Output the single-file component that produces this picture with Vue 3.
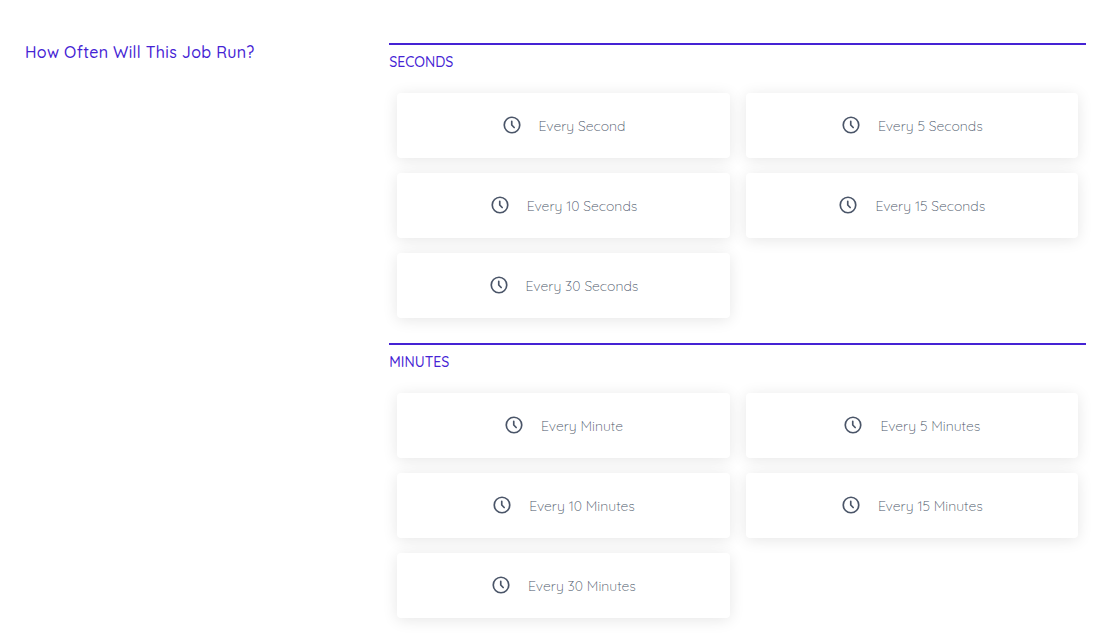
<script setup>
const groups = [
  { name: 'Seconds', options: ['Every Second', 'Every 5 Seconds', 'Every 10 Seconds', 'Every 15 Seconds', 'Every 30 Seconds'] },
  { name: 'Minutes', options: ['Every Minute', 'Every 5 Minutes', 'Every 10 Minutes', 'Every 15 Minutes', 'Every 30 Minutes'] },
]
</script>

<template>
  <main class="page">
    <h1 class="title">How Often Will This Job Run?</h1>
    <div class="groups">
      <section v-for="group in groups" :key="group.name" class="group">
        <h2 class="heading">{{ group.name }}</h2>
        <div class="options">
          <button v-for="option in group.options" :key="option" type="button" class="option">
            <svg class="icon" viewBox="0 0 24 24" aria-hidden="true">
              <circle cx="12" cy="12" r="9.3" />
              <path d="M11.7 7.5v4.5l2.9 3" />
            </svg>
            <span>{{ option }}</span>
          </button>
        </div>
      </section>
    </div>
  </main>
</template>

<style>
body {
  margin: 0;
  background: #fff;
}
</style>

<style scoped>
.page {
  display: grid;
  grid-template-columns: 1fr 2fr;
  column-gap: 16px;
  padding: 43px 27px 0 25px;
  font-family: Quicksand, Lato, sans-serif;
}
.title {
  margin: 0;
  font-size: 16px;
  line-height: 19px;
  font-weight: 500;
  letter-spacing: 0.02em;
  color: #4523d4;
}
.group {
  border-top: 2px solid #4523d4;
  padding-bottom: 25px;
}
.heading {
  margin: 0;
  padding-top: 7px;
  font-size: 14px;
  line-height: 20px;
  font-weight: 500;
  text-transform: uppercase;
  color: #4523d4;
}
.options {
  display: grid;
  grid-template-columns: 1fr 1fr;
  gap: 15px 16px;
  padding: 21px 8px 0;
}
.option {
  display: flex;
  align-items: flex-start;
  justify-content: center;
  gap: 17px;
  padding: 22px 16px 20px;
  border: 0;
  border-radius: 4px;
  background: #fff;
  box-shadow: 0 2px 15px rgba(0, 0, 0, 0.1);
  font-family: inherit;
  font-size: 14px;
  font-weight: 300;
  line-height: 23px;
  color: #4a5568;
  cursor: pointer;
}
.icon {
  width: 20px;
  height: 20px;
  fill: none;
  stroke: #4a5568;
  stroke-width: 2;
  stroke-linecap: round;
  stroke-linejoin: round;
}
</style>
